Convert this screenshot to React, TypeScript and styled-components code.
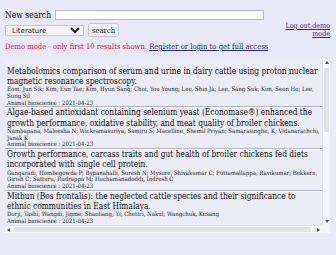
import React from "react";
import styled, { createGlobalStyle } from "styled-components";

const Global = createGlobalStyle`
  html, body { margin: 0; padding: 0; background: #e9e9f7; }
  body {
    font-family: "DejaVu Serif Condensed", "DejaVu Serif", serif;
    font-stretch: condensed;
    color: #111;
  }
`;

const Page = styled.div`
  padding: 10px 6px 0 5px;
`;

const Header = styled.div`
  display: flex;
  justify-content: space-between;
  align-items: flex-start;
`;

const SearchForm = styled.form`
  display: flex;
  flex-direction: column;
  gap: 3px;
`;

const Row = styled.div`
  display: flex;
  align-items: center;
  gap: 4px;
`;

const Label = styled.span`
  font-size: 8.5px;
`;

const TextInput = styled.input`
  width: 209px;
  height: 10px;
  box-sizing: border-box;
  border: 1px solid #b8b8c4;
  background: #fff;
  padding: 0;
`;

const Select = styled.select`
  width: 79px;
  height: 11px;
  font-family: "DejaVu Sans", sans-serif;
  font-size: 7px;
  padding: 0 2px;
  border: 1px solid #c8c8d0;
  border-radius: 1px;
  background: #f4f4f8;
  color: #222;
`;

const Button = styled.button`
  height: 14px;
  padding: 0 3px;
  font-family: inherit;
  font-stretch: condensed;
  font-size: 7.6px;
  border: 1px solid #c8c8d0;
  border-radius: 2px;
  background: #f2f2f6;
  color: #222;
`;

const LogoutLink = styled.a`
  margin-top: 12px;
  width: 50px;
  text-align: right;
  font-size: 7.1px;
  line-height: 8px;
  color: #2b2b99;
  text-decoration: underline;
`;

const Notice = styled.p`
  margin: 4px 0 0;
  font-size: 7.6px;
  line-height: 10px;
  color: #cc2244;
`;

const NoticeLink = styled.a`
  color: #2b2b99;
  text-decoration: underline;
`;

const ScrollFrame = styled.div`
  margin-top: 7px;
  width: 325px;
  display: grid;
  grid-template-columns: 317px 8px;
  grid-template-rows: 166px 8px;
  background: #ececf7;
`;

const Viewport = styled.div`
  overflow: hidden;
`;

const List = styled.div`
  width: 318px;
  padding-top: 6.5px;
`;

const Item = styled.div`
  padding: 0 2px;
  border-bottom: 1px solid #b4b4c4;
  box-shadow: 0 1px 0 #f8f8ff;
`;

const Title = styled.div`
  font-size: 8.3px;
  line-height: 10.2px;
  color: #111;
`;

const Meta = styled.div`
  font-size: 6px;
  line-height: 6.8px;
  color: #222;
`;

const VBar = styled.div`
  display: flex;
  flex-direction: column;
  background: #f5f5fa;
  border-left: 1px solid #e2e2ea;
`;

const HBar = styled.div`
  display: flex;
  align-items: stretch;
  background: #f5f5fa;
  border-top: 1px solid #e2e2ea;
`;

const Corner = styled.div`
  background: #f5f5fa;
`;

const ArrowBox = styled.div`
  flex: 0 0 7px;
  display: flex;
  align-items: center;
  justify-content: center;
`;

const VTrack = styled.div`
  flex: 1;
  display: flex;
  flex-direction: column;
  padding: 2px 1px;
`;

const VThumb = styled.div`
  height: 64px;
  background: #e1e1e9;
  border-radius: 1px;
`;

const HTrack = styled.div`
  flex: 1;
  display: flex;
  padding: 1px 2px;
`;

const HThumb = styled.div`
  flex: 1;
  margin-right: 2px;
  background: #e1e1e9;
  border-radius: 1px;
`;

type Dir = "up" | "down" | "left" | "right";

const paths: Record<Dir, string> = {
  up: "M0 3 L2 0 L4 3 Z",
  down: "M0 0 L4 0 L2 3 Z",
  left: "M3 0 L3 4 L0 2 Z",
  right: "M0 0 L3 2 L0 4 Z",
};

function Arrow({ dir }: { dir: Dir }) {
  const vertical = dir === "up" || dir === "down";
  return (
    <ArrowBox>
      <svg
        width={vertical ? 4 : 3}
        height={vertical ? 3 : 4}
        viewBox={vertical ? "0 0 4 3" : "0 0 3 4"}
      >
        <path d={paths[dir]} fill="#505060" />
      </svg>
    </ArrowBox>
  );
}

const items = [
  {
    title:
      "Metabolomics comparison of serum and urine in dairy cattle using proton nuclear magnetic resonance spectroscopy.",
    authors:
      "Eom, Jun Sik; Kim, Eun Tae; Kim, Hyun Sang; Choi, You Young; Lee, Shin Ja; Lee, Sang Suk; Kim, Seon Ho; Lee, Sung Sil",
  },
  {
    title:
      "Algae-based antioxidant containing selenium yeast (Economase®) enhanced the growth performance, oxidative stability, and meat quality of broiler chickens.",
    authors:
      "Nambapana, Maleesha N; Wickramasuriya, Samiru S; Macelline, Shemil Priyan; Samarasinghe, K; Vidanarachchi, Janak K",
  },
  {
    title:
      "Growth performance, carcass traits and gut health of broiler chickens fed diets incorporated with single cell protein.",
    authors:
      "Gangaradi, Hombegowda P; Bypanahalli, Suresh N; Mysore, Shivakumar C; Puttamallappa, Ravikumar; Bekkere, Girish C; Satturu, Rudrappa M; Huchamanadoddi, Indresh C",
  },
  {
    title:
      "Mithun (Bos frontalis): the neglected cattle species and their significance to ethnic communities in East Himalaya.",
    authors:
      "Dorji, Tashi; Wangdi, Jigme; Shaoliang, Yi; Chettri, Nakul; Wangchuk, Kesang",
  },
  {
    title: "Effects of dietary supplementation on rumen fermentation in Hanwoo steers.",
    authors: "Park, Ji Hoo; Kim, Min Seok; Lee, Jae Sung",
  },
  {
    title: "Genetic parameters for growth traits in indigenous goats.",
    authors: "Rahman, Md Mostafizur; Islam, Rafiqul",
  },
];

export default function App() {
  return (
    <>
      <Global />
      <Page>
        <Header>
          <SearchForm onSubmit={(e) => e.preventDefault()}>
            <Row>
              <Label>New search</Label>
              <TextInput type="text" />
            </Row>
            <Row>
              <Select defaultValue="Literature">
                <option>Literature</option>
              </Select>
              <Button type="submit">search</Button>
            </Row>
          </SearchForm>
          <LogoutLink href="#">Log out demo mode</LogoutLink>
        </Header>
        <Notice>
          Demo mode - only first 10 results shown.{" "}
          <NoticeLink href="#">Register or login to get full access</NoticeLink>
        </Notice>
        <ScrollFrame>
          <Viewport>
            <List>
              {items.map((it, i) => (
                <Item key={i}>
                  <Title>{it.title}</Title>
                  <Meta>{it.authors}</Meta>
                  <Meta>Animal bioscience : 2021-04-23</Meta>
                </Item>
              ))}
            </List>
          </Viewport>
          <VBar>
            <Arrow dir="up" />
            <VTrack>
              <VThumb />
            </VTrack>
            <Arrow dir="down" />
          </VBar>
          <HBar>
            <Arrow dir="left" />
            <HTrack>
              <HThumb />
            </HTrack>
            <Arrow dir="right" />
          </HBar>
          <Corner />
        </ScrollFrame>
      </Page>
    </>
  );
}
